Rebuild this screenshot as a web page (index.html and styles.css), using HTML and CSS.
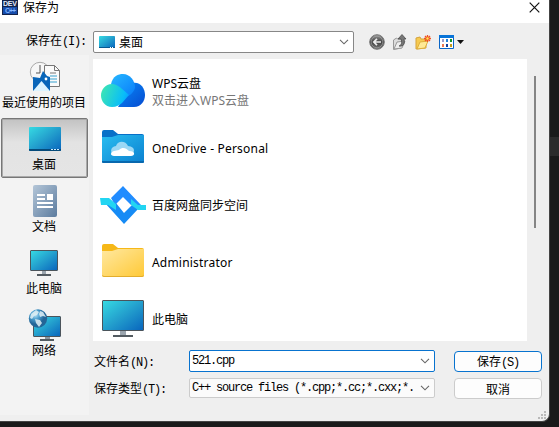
FILE: index.html
```html
<!DOCTYPE html>
<html lang="zh-CN">
<head>
<meta charset="utf-8">
<title>保存为</title>
<link rel="stylesheet" href="styles.css">
</head>
<body>
<svg width="0" height="0" class="defs">
  <defs>
    <linearGradient id="screen" x1="0" y1="0" x2="1" y2="1"><stop offset="0" stop-color="#36dbe3"/><stop offset=".5" stop-color="#239fcd"/><stop offset="1" stop-color="#0864bd"/></linearGradient>
    <linearGradient id="folder" x1="0" y1="0" x2="1" y2="1"><stop offset="0" stop-color="#ffe8a0"/><stop offset="1" stop-color="#ffc936"/></linearGradient>
    <linearGradient id="blue" x1="0" y1="0" x2="1" y2="1"><stop offset="0" stop-color="#29bdf0"/><stop offset="1" stop-color="#0b80d0"/></linearGradient>
    <linearGradient id="doc" x1="0" y1="0" x2="1" y2="1"><stop offset="0" stop-color="#b4c6d8"/><stop offset="1" stop-color="#5c7c9f"/></linearGradient>
    <linearGradient id="wpsl" x1="0" y1=".3" x2="1" y2=".6"><stop offset="0" stop-color="#3ce5b4"/><stop offset=".8" stop-color="#08bdf9"/><stop offset="1" stop-color="#089fff"/></linearGradient>
    <linearGradient id="wpst" x1="0" y1="0" x2="1" y2="1"><stop offset="0" stop-color="#27b8ff"/><stop offset="1" stop-color="#087dfa"/></linearGradient>
    <linearGradient id="wpsr" x1="0" y1="0" x2="1" y2="1"><stop offset="0" stop-color="#088bfa"/><stop offset="1" stop-color="#064bd0"/></linearGradient>
    <radialGradient id="globe" cx=".35" cy=".3"><stop offset="0" stop-color="#b9e4f6"/><stop offset=".5" stop-color="#4a9dcd"/><stop offset="1" stop-color="#236697"/></radialGradient>
    <linearGradient id="ball" x1="0" y1="0" x2="0" y2="1"><stop offset="0" stop-color="#999"/><stop offset=".5" stop-color="#444"/><stop offset="1" stop-color="#777"/></linearGradient>
  </defs>
</svg>
<main class="window">
  <header class="title">
    <svg class="app" width="16" height="15" viewBox="0 0 16 15"><path fill="#14234a" d="M0 0h16v15H0z"/><path fill="#174caa" d="M1 7h14v7H1z"/><text x="1" y="6" textLength="14" fill="#e4edff">DEV</text><text x="3" y="13" textLength="11" fill="#83b7ff">C++</text></svg>
    <span>保存为</span>
    <svg class="close" width="11" height="11" viewBox="0 0 11 11"><path d="M.7.7l9.600 9.600M10.300.7L.7 10.300" stroke="#111" stroke-width="1.200"/></svg>
  </header>
  <div class="location">
    <label class="sim">保存在<i>(I):</i></label>
    <div class="combo place">
      <svg width="16" height="12" viewBox="0 0 16 12"><rect width="16" height="12" rx=".8" fill="url(#screen)"/><path fill="#075991" d="M0 11h16v1H0z"/><path stroke="#fff" stroke-dasharray="1 1" d="M11 11.500h4"/></svg>
      <span>桌面</span>
      <svg class="chev" width="10" height="6" viewBox="0 0 10 6"><path d="M1 .8l4 4 4-4"/></svg>
    </div>
    <nav class="tools">
      <svg width="16" height="16" viewBox="0 0 16 16"><circle cx="8" cy="8" r="7.300" fill="url(#ball)" stroke="#777"/><circle cx="8" cy="8" r="5.800" fill="none" stroke="#aaa" stroke-width=".6"/><path d="M12 8H5M8 4.800L4.800 8 8 11.200" fill="none" stroke="#eee" stroke-width="1.700"/></svg>
      <svg width="16" height="16" viewBox="0 0 16 16"><path fill="#ddd" stroke="#999" d="M1.500 6l3-2 1 1h4v9l-8 1.500z"/><path fill="#eee" stroke="#999" d="M2 15l3-7 8-1-3 7z"/><path fill="#777" stroke="#444" stroke-width=".7" d="M7 12c3-1 3-4 2-7H6l4-4.500L14 5h-2c1 4 0 8-5 7z"/></svg>
      <svg width="16" height="16" viewBox="0 0 16 16"><path fill="#f6ca50" stroke="#d5a33b" d="M1 4l4-1 1 2h5v9l-10 1z"/><path fill="#ffe995" stroke="#dfae3b" d="M2 15l3-7 8-1-3 7z"/><path d="M12.500 1v7M9 4.500h7M10 2l5 5M15 2l-5 5" stroke="#f05222" stroke-width="1.300"/><circle cx="12.500" cy="4.500" r="1.200" fill="#ffe34d"/></svg>
      <svg width="25" height="14" viewBox="0 0 25 14"><path fill="#fff" stroke="#0965c7" d="M.5.5h14v13H.5z"/><path fill="#0874d8" d="M0 0h15v3H0z"/><path fill="#9b9cca" d="M3 4h2v3H3z"/><path fill="#2482d5" d="M7 4h2v3H7z"/><path fill="#169126" d="M11 4h2v3h-2z"/><path fill="#ec7950" d="M3 9h2v3H3z"/><path fill="#143f9d" d="M7 9h2v3H7z"/><path fill="#c39a19" d="M11 9h2v3h-2z"/><path fill="#111" d="M18 5h7l-3.500 4z"/></svg>
    </nav>
  </div>
  <div class="middle">
    <aside class="places">
      <div class="place-item">
        <svg width="32" height="32" viewBox="0 0 32 32"><circle cx="11" cy="11" r="9.700" fill="#f7f7f7" stroke="#aaa"/><path d="M11 4v8H7" fill="none" stroke="#555"/><path fill="#fafafa" stroke="#777" d="M15.500 4.500h10l5 5v16h-15z"/><path d="M25.500 4.500v5h5M21 12h6" fill="none" stroke="#777"/><path d="M21 15h7M21 18h7M21 21h7" stroke="#35a0cf"/><path fill="#0865b9" d="M4 16l7 1 3-7 4 5 3 1v14H4z"/><path fill="#dcf3ff" d="M4 30l8.500-10L21 30z"/><circle cx="17" cy="18" r="1.400" fill="#fff"/></svg>
        <span>最近使用的项目</span>
      </div>
      <div class="place-item selected">
        <svg width="32" height="32" viewBox="0 0 32 32"><rect y="4" width="32" height="24" rx="1" fill="url(#screen)"/><path fill="#064b7a" d="M0 26h32v1q0 1-1 1H1q-1 0-1-1z"/><path stroke="#cceaff" stroke-dasharray="2 1" d="M22 26.500h9"/></svg>
        <span>桌面</span>
      </div>
      <div class="place-item">
        <svg width="32" height="32" viewBox="0 0 32 32"><rect x="4" width="24" height="32" rx="2" fill="url(#doc)"/><path fill="#fff" d="M8 9h8v2H8zM8 13h8v2H8zM18 9h6v6h-6zM8 17h16v2H8zM8 21h16v2H8z"/></svg>
        <span>文档</span>
      </div>
      <div class="place-item">
        <svg width="32" height="32" viewBox="0 0 32 32"><path fill="#9ba5ae" d="M13 24h4v4h-4z"/><rect x="1.500" y="3.500" width="27" height="20" rx=".5" fill="url(#screen)" stroke="#4b545b"/><path fill="#535b61" d="M8 27h14v2H8z"/></svg>
        <span>此电脑</span>
      </div>
      <div class="place-item">
        <svg width="34" height="32" viewBox="0 0 34 32"><path fill="#8996a1" d="M17 27h5v3h-5z"/><rect x="5.500" y="7.500" width="27" height="20" rx=".5" fill="url(#screen)" stroke="#4b545b"/><path fill="#535b61" d="M12 30h14v2H12z"/><circle cx="10" cy="9.500" r="9.200" fill="url(#globe)"/><path fill="#e0f0f4" opacity=".85" d="M3 5l5-4 3 2-2 3-3 1-2 3-2-1zM12 2l3 1 3 5-3-1-3 1-1-3zM7 10l5 1 2 3-3 4-3-4z"/></svg>
        <span>网络</span>
      </div>
    </aside>
    <section class="files">
      <div class="file">
        <svg width="46" height="48" viewBox="0 2 46 48"><path fill="url(#wpsr)" d="M18 42l14-24c8-2 13 5 13 12 0 6-4 12-11 12z"/><path fill="url(#wpst)" d="M11 19C13 11 18 9 23 9c7 0 12 7 12 13 0 4-5 9-8 9z"/><path fill="url(#wpsl)" d="M12 19c6 0 10 5 17 11-5 5-8 12-17 12C5 42 1 36 1 30.500S5 19 12 19z"/></svg>
        <p>WPS云盘<small>双击进入WPS云盘</small></p>
      </div>
      <div class="file">
        <svg width="46" height="48" viewBox="0 0 46 48"><path fill="#0870c8" d="M2 8q0-2 2-2h9l5 4h24q2 0 2 2v10H2z"/><path fill="url(#blue)" d="M2 13h10l6-2h26v26q0 2-2 2H4q-2 0-2-2z"/><path fill="#0868ae" d="M2 37h42v1q0 1-1 1H3q-1 0-1-1z"/><path fill="#9bd8f5" d="M16 31c-7 0-6-9 0-9 2-6 10-5 12 0 8 0 8 9 0 9z"/><path fill="#fff" d="M14 32c-4 0-4-4 0-5l5-1c4-4 8-1 10 1 7 0 6 5 2 5z"/></svg>
        <p class="latin">OneDrive - Personal</p>
      </div>
      <div class="file">
        <svg class="sync" width="46" height="48" viewBox="0 0 46 48"><path fill="#218cff" d="M11 17L23 5l18 19h-10L23 16l-8 8z"/><path fill="#168bf5" d="M5 22h11l8 10 8-8 7 3-15 16z"/><path fill="#22d5f2" d="M0 17h9l7 6v6l-8-5H1zM31 18l7 6h8v5h-8l-7-5z"/></svg>
        <p>百度网盘同步空间</p>
      </div>
      <div class="file">
        <svg width="46" height="48" viewBox="0 0 46 48"><path fill="#f6b818" d="M2 8q0-2 2-2h9l5 4h24q2 0 2 2v10H2z"/><path fill="url(#folder)" d="M2 13h10l6-2h26v26q0 2-2 2H4q-2 0-2-2z"/><path fill="#e3ad2c" d="M2 37q0 2 2 2h38q2 0 2-2l-2 1H4z"/></svg>
        <p class="latin">Administrator</p>
      </div>
      <div class="file">
        <svg width="46" height="48" viewBox="0 0 46 48"><path fill="#9ba5ae" d="M20 35h6v6h-6z"/><rect x="2.500" y="5.500" width="41" height="30" rx=".5" fill="url(#screen)" stroke="#4b545b"/><path fill="#535b61" d="M13 40h20v2H13z"/></svg>
        <p>此电脑</p>
      </div>
    </section>
    <div class="scroll"><div class="thumb"></div></div>
  </div>
  <form class="fields">
    <label class="sim">文件名<i>(N):</i></label>
    <div class="combo sim name"><i>521.cpp</i><svg class="chev" width="10" height="6" viewBox="0 0 10 6"><path d="M1 .8l4 4 4-4"/></svg></div>
    <button type="button" class="sim primary">保存<i>(S)</i></button>
    <label class="sim">保存类型<i>(T):</i></label>
    <div class="combo sim kind"><i>C++ source files (*.cpp;*.cc;*.cxx;*.</i><svg class="chev" width="10" height="6" viewBox="0 0 10 6"><path d="M1 .8l4 4 4-4"/></svg></div>
    <button type="button" class="sim">取消</button>
  </form>
  <svg class="grip" width="9" height="9" viewBox="0 0 9 9"><path fill="#b9b9b9" d="M6 0h2v2H6zM3 3h2v2H3zM6 3h2v2H6zM0 6h2v2H0zM3 6h2v2H3zM6 6h2v2H6z"/></svg>
</main>
<div class="backdrop"></div>
</body>
</html>
```
FILE: styles.css
```css
* { box-sizing: border-box; }
body {
  margin: 0;
  width: 559px;
  height: 427px;
  overflow: hidden;
  display: flex;
  background: #1a1a1a;
  color: #000;
  font: 12px/16px "Noto Sans", "Noto Sans CJK SC", sans-serif;
}
svg { display: block; flex: none; }
.defs { position: absolute; }
.window {
  position: relative;
  width: 550px;
  height: 422px;
  background: #efefef;
  border-right: 1px solid #444;
  border-bottom: 1px solid #444;
  border-bottom-right-radius: 8px;
}
.backdrop { flex: 1; height: 19px; margin-top: 137px; background: #2b2b2b; }
.title { height: 23px; background: #fff; display: flex; align-items: flex-start; padding: 0 9px 0 2px; }
.title span { margin-left: 5px; }
.title .close { margin: 2px 0 0 auto; }
.app text { font: bold 7px "Liberation Sans", sans-serif; }
.location { height: 36px; display: flex; align-items: flex-start; padding-top: 8px; }
.location label { width: 93px; padding: 1px 0 0 26px; }
.sim { font-family: "Noto Sans CJK SC", sans-serif; font-size: 12px; line-height: 16px; white-space: pre; }
.sim i { font: 12px/16px "Liberation Mono", monospace; letter-spacing: -1.2px; }
.combo { display: flex; align-items: center; background: #fff; border: 1px solid #878787; border-radius: 2px; }
.place { width: 261px; height: 22px; padding: 0 4px 0 5px; }
.place span { margin: 1px 0 0 4px; }
.chev { margin-left: auto; }
.chev path { fill: none; stroke: #666; stroke-width: 1.1; }
.tools { display: flex; align-items: center; gap: 7px; margin: 3px 0 0 15px; }
.tools svg:last-child { margin-left: 1px; }
.middle { height: 282px; display: flex; }
.places { width: 89px; height: 360px; margin: -4px 4px 0 0; padding-top: 1px; background: #f3f3f3; }
.place-item { width: 87px; height: 60px; margin: 0 0 2px 1px; padding-top: 5px; display: flex; flex-direction: column; align-items: center; white-space: nowrap; }
.place-item span { margin: 2px 1px 0 0; }
.place-item.selected { border: 1px solid #777; border-radius: 2px; box-shadow: inset 0 0 0 1px #aaa; background: linear-gradient(#c2c2c2, #e3e3e3 40%, #e5e5e5); padding-top: 4px; }
.files { width: 434px; overflow: hidden; background: #fff; padding-top: 3px; }
.file { height: 57px; padding-left: 7px; display: flex; align-items: center; }
.file p { margin: 2px 0 0 6px; line-height: 17px; }
.file p.latin { letter-spacing: .2px; }
.file small { display: block; color: #777; font-size: 12px; }
.sync { filter: blur(.6px); }
.scroll { width: 18px; padding: 17px 0 0 7px; }
.thumb { width: 2px; height: 152px; background: #858585; }
.fields { display: grid; grid-template-columns: 95px 246px 88px; grid-template-rows: 22px 21px; row-gap: 5px; margin: 9px 0 0 94px; }
.fields label { padding-top: 3px; }
.fields .combo { padding: 0 4px 0 2px; }
.fields .name { border-color: #0873cf; }
.fields .kind { border-color: #ccc; height: 20px; margin-top: 1px; background: #fbfbfb; }
.fields button { margin-left: 19px; width: 88px; height: 21px; margin-top: 1px; padding: 0; background: #fdfdfd; border: 1px solid #ccc; border-radius: 4px; color: #000; }
.fields .primary { border-color: #0873cf; }
.grip { position: absolute; right: 2px; bottom: 1px; }
```
